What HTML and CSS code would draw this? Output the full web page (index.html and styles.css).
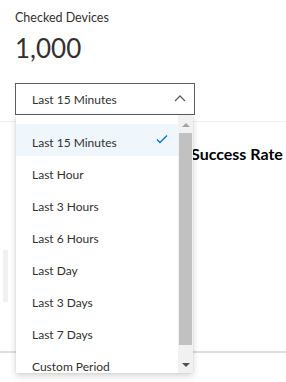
FILE: index.html
```html
<!DOCTYPE html>
<html lang="en">
<head>
  <meta charset="UTF-8">
  <meta name="viewport" content="width=device-width, initial-scale=1.0">
  <title>Checked Devices</title>
  <link rel="stylesheet" href="styles.css">
</head>
<body>
  <div class="summary">
    <div class="label">Checked Devices</div>
    <div class="value">1,000</div>
    <div class="picker">
      <div class="select">
        <span>Last 15 Minutes</span>
        <svg class="chevron" width="12" height="8" viewBox="0 0 12 8">
          <polyline points="1,7 6,2 11,7" fill="none" stroke="#605e5c" stroke-width="1.3"/>
        </svg>
      </div>
      <div class="menu">
        <ul class="options">
          <li class="selected">Last 15 Minutes
            <svg class="check" width="12" height="10" viewBox="0 0 12 10">
              <polyline points="1,5.5 4,8.5 11,1.5" fill="none" stroke="#0078d4" stroke-width="1.4"/>
            </svg>
          </li>
          <li>Last Hour</li>
          <li>Last 3 Hours</li>
          <li>Last 6 Hours</li>
          <li>Last Day</li>
          <li>Last 3 Days</li>
          <li>Last 7 Days</li>
          <li>Custom Period</li>
        </ul>
        <div class="scrollbar">
          <div class="arrow up"></div>
          <div class="thumb"></div>
          <div class="arrow down"></div>
        </div>
      </div>
    </div>
  </div>

  <div class="charts">
    <div class="card side">
      <div class="stub"></div>
    </div>
    <div class="card">
      <h2>Success Rate</h2>
    </div>
  </div>
  <div class="axis"></div>
  <div class="footer"></div>
</body>
</html>
```

FILE: styles.css
```css
body {
  margin: 0;
  min-height: 382px;
  background-color: #fff;
  color: #323130;
  font-family: Lato, "Open Sans", sans-serif;
}
.summary {
  padding: 9px 15px 0;
}
.label {
  font-size: 12.5px;
  line-height: 18px;
}
.value {
  margin-top: 3px;
  font-size: 26px;
  line-height: 36px;
}
.picker {
  position: relative;
  z-index: 2;
  width: 180px;
  margin-top: 17px;
}
.select {
  display: flex;
  align-items: center;
  justify-content: space-between;
  height: 30px;
  padding: 0 8px 0 16px;
  border: 1px solid #605e5c;
  font-size: 12px;
}
.chevron {
  margin-top: -2px;
}
.menu {
  position: absolute;
  top: 32px;
  left: 1px;
  display: flex;
  width: 177px;
  height: 258px;
  overflow: hidden;
  background-color: #fff;
  box-shadow: 0 3px 7px rgba(0, 0, 0, 0.16), 0 0 2px rgba(0, 0, 0, 0.1);
}
.options {
  flex: 1;
  margin: 0;
  padding: 9px 0 0;
  list-style: none;
  font-size: 12px;
}
.options li {
  display: flex;
  flex-shrink: 0;
  align-items: center;
  justify-content: space-between;
  height: 32px;
  padding: 4px 10px 0 16px;
  box-sizing: border-box;
}
.options .selected {
  background-color: #eff6fc;
}
.check {
  margin-top: -6px;
}
.scrollbar {
  display: flex;
  flex-direction: column;
  width: 15px;
  background-color: #f1f1f1;
}
.arrow {
  position: relative;
  height: 18px;
}
.arrow::after {
  content: "";
  position: absolute;
  left: 4px;
  top: 8px;
  border-left: 4px solid transparent;
  border-right: 4px solid transparent;
}
.up::after {
  border-bottom: 4px solid #a3a3a3;
}
.down {
  height: 28px;
}
.down::after {
  top: 18px;
  border-top: 4px solid #505050;
}
.thumb {
  height: 212px;
  margin: 0 1px;
  background-color: #c1c1c1;
}
.charts {
  display: flex;
  margin-top: 6px;
  height: 230px;
}
.card {
  flex: 1;
  border-top: 1px solid #eeeeee;
  padding: 22px 0 0 13px;
}
.card.side {
  flex: 0 0 178px;
  padding: 0;
}
.stub {
  width: 5px;
  height: 52px;
  margin: 128px 0 0 3px;
  background-color: #f1f1f1;
}
.card h2 {
  margin: 0;
  font-size: 16px;
  line-height: 20px;
  font-weight: 700;
  color: #000;
  white-space: nowrap;
}
.axis {
  height: 2px;
  background-color: #dedede;
}
.footer {
  height: 30px;
}
```
